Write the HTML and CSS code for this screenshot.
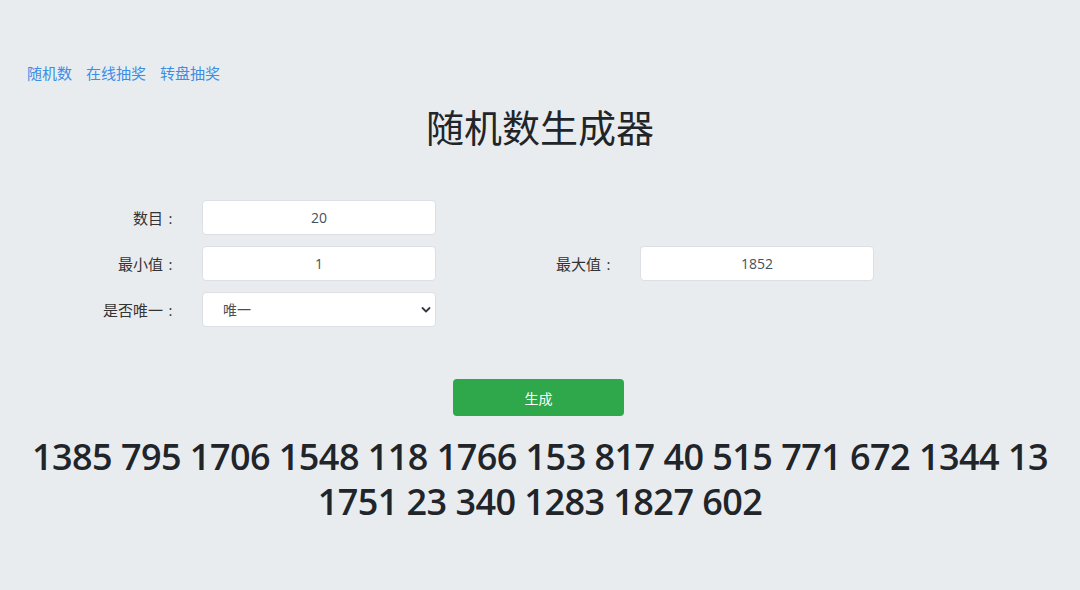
FILE: index.html
```html
<!DOCTYPE html>
<html lang="zh-CN">
<head>
  <meta charset="UTF-8">
  <title>随机数生成器</title>
  <link rel="stylesheet" href="styles.css">
</head>
<body>

  <!-- Top links -->
  <nav class="top-nav">
    <a href="#">随机数</a>
    <a href="#">在线抽奖</a>
    <a href="#">转盘抽奖</a>
  </nav>

  <h1 class="title">随机数生成器</h1>

  <!-- Options -->
  <form class="gen-form" onsubmit="return false;">
    <div class="form-row">
      <div class="field">
        <label for="count">数目<span class="colon">:</span></label>
        <input type="text" id="count" value="20">
      </div>
    </div>
    <div class="form-row">
      <div class="field">
        <label for="min">最小值<span class="colon">:</span></label>
        <input type="text" id="min" value="1">
      </div>
      <div class="field">
        <label for="max">最大值<span class="colon">:</span></label>
        <input type="text" id="max" value="1852">
      </div>
    </div>
    <div class="form-row">
      <div class="field">
        <label for="unique">是否唯一<span class="colon">:</span></label>
        <div class="select-wrap">
          <select id="unique">
            <option>唯一</option>
            <option>不唯一</option>
          </select>
          <svg class="chevron" width="10" height="8" viewBox="0 0 10 8">
            <path d="M1.5 2 L5 5.5 L8.5 2" fill="none" stroke="#343a40" stroke-width="1.8" stroke-linecap="round" stroke-linejoin="round"/>
          </svg>
        </div>
      </div>
    </div>

    <div class="actions">
      <button type="submit" class="btn-generate">生成</button>
    </div>
  </form>

  <div class="result">1385 795 1706 1548 118 1766 153 817 40 515 771 672 1344 13 1751 23 340 1283 1827 602</div>

</body>
</html>
```

FILE: styles.css
```css
* { margin: 0; padding: 0; box-sizing: border-box; }
body {
  font-family: "Open Sans", "Noto Sans", "Noto Sans CJK SC", sans-serif;
  background: #e9ecef;
  color: #212529;
  min-height: 100vh;
}
.top-nav {
  display: flex;
  gap: 14px;
  padding: 62px 0 0 27px;
  line-height: 22px;
}
.top-nav a {
  color: #3a8ee6;
  font-size: 15px;
  text-decoration: none;
}
.top-nav a:hover { text-decoration: underline; }
.title {
  margin-top: 18px;
  text-align: center;
  font-size: 38px;
  font-weight: 400;
  line-height: 50px;
  color: #212529;
}
.gen-form { margin-top: 48px; }
.form-row {
  display: flex;
  margin-bottom: 11px;
}
.field {
  display: flex;
  align-items: center;
  width: 438px;
}
.field label {
  width: 178px;
  text-align: right;
  font-size: 15px;
  color: #333;
}
/* colon sits in the middle of a full-width cell */
.colon {
  display: inline-block;
  width: 15px;
  text-align: center;
}
.field input,
.select-wrap {
  margin-left: 24px;
  width: 234px;
}
.field input,
.field select {
  height: 35px;
  border: 1px solid #dcdfe3;
  border-radius: 4px;
  background: #fff;
  font-family: inherit;
  font-size: 14px;
  color: #495057;
  outline: none;
}
.field input { text-align: center; }
.select-wrap { position: relative; }
.field select {
  width: 100%;
  padding-left: 20px;
  appearance: none;
  -webkit-appearance: none;
}
.chevron {
  position: absolute;
  right: 5px;
  top: 14px;
  pointer-events: none;
}
.actions {
  display: flex;
  justify-content: center;
  margin-top: 52px;
}
.btn-generate {
  width: 171px;
  height: 37px;
  margin-right: 3px;
  background: #2ea84a;
  color: #fff;
  border: none;
  border-radius: 4px;
  font-family: inherit;
  font-size: 14px;
  cursor: pointer;
}
.btn-generate:hover { background: #218838; }
.result {
  margin: 18px auto 0;
  max-width: 1040px;
  text-align: center;
  font-size: 36px;
  font-weight: 600;
  letter-spacing: -0.55px;
  line-height: 45px;
  color: #212529;
}
```
